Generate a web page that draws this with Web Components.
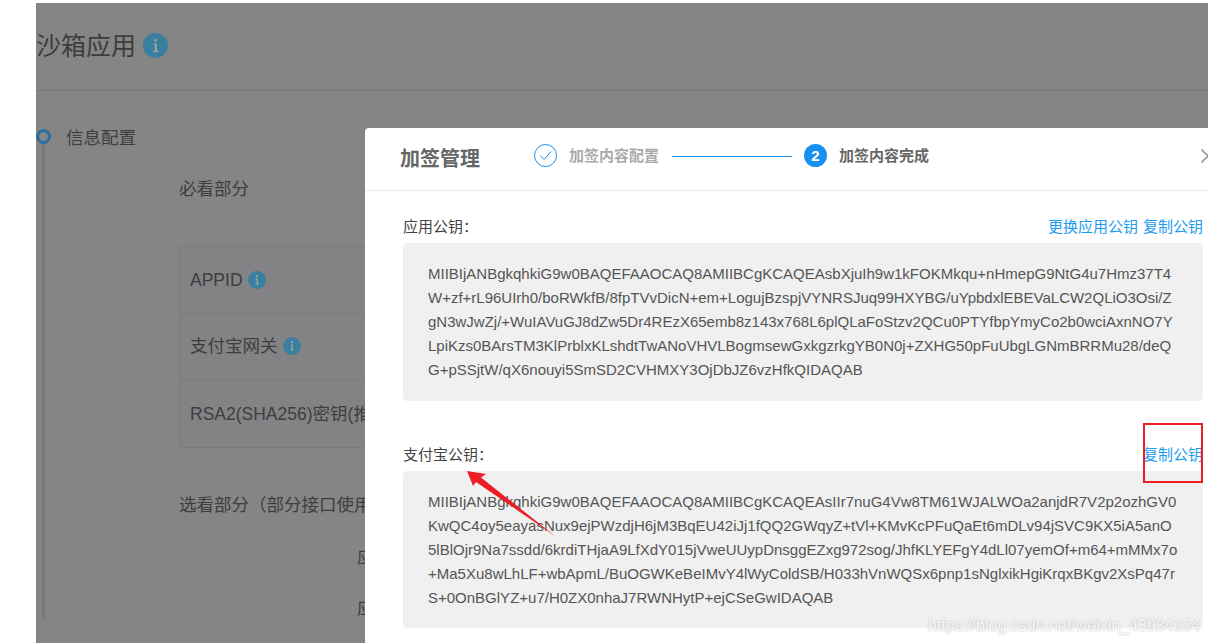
<!DOCTYPE html>
<html lang="zh">
<head>
<meta charset="utf-8">
<title>沙箱应用</title>
<style>
html,body{margin:0;padding:0;background:#fff;}
body{width:1208px;height:643px;overflow:hidden;font-family:"Liberation Sans","Noto Sans CJK SC",sans-serif;}
</style>
</head>
<body>
<x-app>
  <x-dim-page>
    <x-page-head>沙箱应用</x-page-head>
    <x-timeline-step title-text="信息配置">
      <x-section-label>必看部分</x-section-label>
      <x-config-table>
        <x-config-row>APPID <x-info-icon></x-info-icon></x-config-row>
        <x-config-row>支付宝网关 <x-info-icon></x-info-icon></x-config-row>
        <x-config-row>RSA2(SHA256)密钥(推荐)</x-config-row>
      </x-config-table>
      <x-section-label style="margin-top:45px">选看部分（部分接口使用）</x-section-label>
      <x-section-label style="margin:28px 0 0 178px">应用网关</x-section-label>
      <x-section-label style="margin:27px 0 0 178px">应用网关</x-section-label>
    </x-timeline-step>
  </x-dim-page>

  <x-modal>
    <x-modal-head>
      <x-step-done slot="steps">加签内容配置</x-step-done>
      <x-step-line slot="steps"></x-step-line>
      <x-step-current slot="steps" num="2">加签内容完成</x-step-current>
    </x-modal-head>
    <x-key-row label="应用公钥：">
      <a slot="links">更换应用公钥</a>
      <a slot="links">复制公钥</a>
      <div>MIIBIjANBgkqhkiG9w0BAQEFAAOCAQ8AMIIBCgKCAQEAsbXjuIh9w1kFOKMkqu+nHmepG9NtG4u7Hmz37T4</div>
      <div>W+zf+rL96UIrh0/boRWkfB/8fpTVvDicN+em+LogujBzspjVYNRSJuq99HXYBG/uYpbdxlEBEVaLCW2QLiO3Osi/Z</div>
      <div>gN3wJwZj/+WuIAVuGJ8dZw5Dr4REzX65emb8z143x768L6plQLaFoStzv2QCu0PTYfbpYmyCo2b0wciAxnNO7Y</div>
      <div>LpiKzs0BArsTM3KlPrblxKLshdtTwANoVHVLBogmsewGxkgzrkgYB0N0j+ZXHG50pFuUbgLGNmBRRMu28/deQ</div>
      <div>G+pSSjtW/qX6nouyi5SmSD2CVHMXY3OjDbJZ6vzHfkQIDAQAB</div>
    </x-key-row>
    <x-key-row label="支付宝公钥：" style="margin-top:41px;--code-h:157px">
      <a slot="links">复制公钥</a>
      <div>MIIBIjANBgkqhkiG9w0BAQEFAAOCAQ8AMIIBCgKCAQEAsIIr7nuG4Vw8TM61WJALWOa2anjdR7V2p2ozhGV0</div>
      <div>KwQC4oy5eayasNux9ejPWzdjH6jM3BqEU42iJj1fQQ2GWqyZ+tVl+KMvKcPFuQaEt6mDLv94jSVC9KX5iA5anO</div>
      <div>5lBlOjr9Na7ssdd/6krdiTHjaA9LfXdY015jVweUUypDnsggEZxg972sog/JhfKLYEFgY4dLl07yemOf+m64+mMMx7o</div>
      <div>+Ma5Xu8wLhLF+wbApmL/BuOGWKeBeIMvY4lWyColdSB/H033hVnWQSx6pnp1sNglxikHgiKrqxBKgv2XsPq47r</div>
      <div>S+0OnBGlYZ+u7/H0ZX0nhaJ7RWNHytP+ejCSeGwIDAQAB</div>
    </x-key-row>
  </x-modal>

  <x-annotations></x-annotations>
  <x-watermark>https://blog.csdn.net/weixin_43934104</x-watermark>
</x-app>

<script>
function def(name, css, html){
  customElements.define(name, class extends HTMLElement{
    constructor(){
      super();
      const root=this.attachShadow({mode:'open'});
      this._css=css; this._html=html;
      root.innerHTML='<style>'+css+'</style>';
    }
    connectedCallback(){
      const h=this._html;
      this.shadowRoot.innerHTML='<style>'+this._css+'</style>'+(typeof h==='function'?h(this):h);
    }
  });
}
def('x-app',
 ':host{display:block;position:relative;width:1208px;height:643px;overflow:hidden;background:#fff;padding:3px 0 0 36px;box-sizing:border-box;}',
 '<slot></slot>');
def('x-dim-page',
 ':host{display:block;height:640px;background:#858585;color:#3e3e3e;overflow:hidden;font-size:17.5px;}',
 '<slot></slot>');
def('x-page-head',
 ':host{display:flex;align-items:center;gap:7px;height:81px;padding-bottom:6px;border-bottom:1px solid #787878;font-size:25px;color:#3c3c3c;}'+
 'svg{display:block;width:25px;height:25px;margin-top:4px;}',
 '<slot></slot><svg viewBox="0 0 25 25"><circle cx="12.5" cy="12.5" r="12.5" fill="#3a7fa0"/><circle cx="12.5" cy="7.2" r="1.3" fill="#a9a79f"/><path d="M10.3 10.4h3.4v7.4h1.6v1.1h-5v-1.1h1.6v-6.3h-1.6z" fill="#a9a79f"/></svg>');
def('x-timeline-step',
 ':host{display:grid;grid-template-columns:15px 1fr;column-gap:15px;margin-top:38px;}'+
 '.rail{display:flex;flex-direction:column;align-items:center;}'+
 '.dot{width:15px;height:15px;box-sizing:border-box;border:3.5px solid #2a6d9e;border-radius:50%;flex:none;}'+
 '.line{width:3px;flex:1;background:#797979;}'+
 '.title{line-height:18px;height:18px;}'+
 '.body{padding:30px 0 0 113px;}',
 h=>'<div class="rail"><div class="dot"></div><div class="line"></div></div><div><div class="title">'+h.getAttribute('title-text')+'</div><div class="body"><slot></slot></div></div>');
def('x-section-label',
 ':host{display:block;line-height:24px;white-space:nowrap;}',
 '<slot></slot>');
def('x-config-table',
 ':host{display:block;margin-top:45px;background:#838386;border:1px solid #7b7b7b;border-radius:4px 0 0 4px;box-sizing:border-box;height:202px;width:1000px;}',
 '<slot></slot>');
def('x-config-row',
 ':host{display:flex;align-items:center;gap:5.5px;height:66.67px;box-sizing:border-box;padding-left:10px;border-bottom:1px solid #7b7b7b;white-space:nowrap;line-height:20px;}'+
 ':host(:last-child){border-bottom:0;}',
 '<slot></slot>');
def('x-info-icon',
 ':host{display:block;width:18px;height:18px;flex:none;}svg{display:block;width:18px;height:18px;}',
 '<svg viewBox="0 0 25 25"><circle cx="12.5" cy="12.5" r="12.5" fill="#3a7fa0"/><circle cx="12.5" cy="7.2" r="1.5" fill="#a9a79f"/><path d="M10.3 10.4h3.4v7.4h1.6v1.1h-5v-1.1h1.6v-6.3h-1.6z" fill="#a9a79f"/></svg>');
def('x-modal',
 ':host{display:block;position:absolute;left:365px;top:128px;width:850px;height:530px;background:#fff;border-radius:4px;overflow:hidden;}',
 '<slot></slot>');
def('x-modal-head',
 ':host{display:flex;align-items:flex-start;position:relative;box-sizing:border-box;height:63px;border-bottom:1px solid #e8e8e8;margin-bottom:23px;padding-left:35px;}'+
 '.t{font-size:20px;font-weight:700;color:#666;width:134px;flex:none;line-height:62px;}'+
 '.steps{display:flex;align-items:center;gap:12px;margin-top:16px;}'+
 'svg{position:absolute;left:836px;top:21px;width:14px;height:14px;}',
 '<div class="t">加签管理</div><div class="steps"><slot name="steps"></slot></div>'+
 '<svg viewBox="0 0 14 14"><path d="M0.5 0.5L13.5 13.5M13.5 0.5L0.5 13.5" stroke="#9a9a9a" stroke-width="1.6" fill="none"/></svg>');
def('x-step-done',
 ':host{display:flex;align-items:center;gap:12px;font-size:15px;font-weight:700;color:#aaa;white-space:nowrap;line-height:23px;padding-right:1px;}svg{display:block;width:23px;height:23px;}',
 '<svg viewBox="0 0 23 23"><circle cx="11.5" cy="11.5" r="11" fill="none" stroke="#1890f0" stroke-width="1"/><path d="M6.3 11.5l3.8 4 6.8-7.8" fill="none" stroke="#1890f0" stroke-width="1"/></svg><slot></slot>');
def('x-step-line',
 ':host{display:block;width:120px;margin-top:1px;}div{height:1px;background:#1890f0;}',
 '<div></div>');
def('x-step-current',
 ':host{display:flex;align-items:center;gap:12px;font-size:15px;font-weight:700;color:#666;white-space:nowrap;line-height:23px;}'+
 '.n{width:23px;height:23px;border-radius:50%;background:#1890f0;color:#fff;font-size:15px;line-height:23px;text-align:center;font-family:"Liberation Sans",sans-serif;}',
 h=>'<span class="n">'+h.getAttribute('num')+'</span><slot></slot>');
def('x-key-row',
 ':host{display:block;margin-left:38px;width:800px;font-size:15px;}'+
 '.top{display:flex;justify-content:space-between;line-height:26px;height:24px;color:#444;white-space:nowrap;margin-bottom:5px;font-size:15px;}'+
 '.links{display:flex;gap:5px;}'+
 '::slotted(a){color:#1a9cf0;text-decoration:none;}'+
 '.code{background:#f0f0f0;border-radius:4px;padding:19px 25px;color:#555;line-height:24px;height:var(--code-h,158px);box-sizing:border-box;white-space:nowrap;overflow:hidden;}',
 h=>'<div class="top"><span>'+h.getAttribute('label')+'</span><span class="links"><slot name="links"></slot></span></div><div class="code"><slot></slot></div>');
def('x-annotations',
 ':host{display:block;position:absolute;left:0;top:0;width:1208px;height:643px;pointer-events:none;}'+
 '.box{position:absolute;left:1143px;top:423px;width:60px;height:60px;box-sizing:border-box;border:2px solid #ee1c25;}'+
 'svg{position:absolute;left:0;top:0;}',
 '<svg width="1208" height="643"><polygon points="467,471 486,474 481,477.5 555,536 476,482 473,486" fill="#ee1c25"/></svg><div class="box"></div>');
def('x-watermark',
 ':host{display:block;position:absolute;left:928px;top:616px;font-size:16px;line-height:20px;color:rgba(255,255,255,.9);text-shadow:0 0 2px rgba(120,120,120,.6);white-space:nowrap;}',
 '<slot></slot>');
</script>
</body>
</html>
